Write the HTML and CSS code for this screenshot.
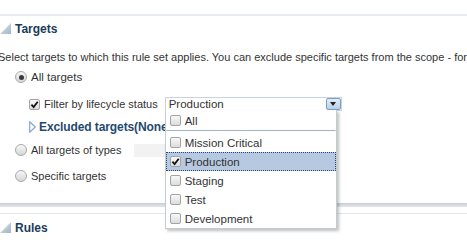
FILE: index.html
```html
<!DOCTYPE html>
<html lang="en">
<head>
    <meta charset="UTF-8">
    <title>Rule Set Targets</title>
    <link rel="stylesheet" href="styles.css">
</head>
<body>
    <div class="rule-top"></div>

    <div class="section-head">
        <svg class="disclosed" width="11" height="11" viewBox="0 0 11 11">
            <defs>
                <linearGradient id="tri1" x1="0" y1="0" x2="1" y2="1">
                    <stop offset="0" stop-color="#e3eaf1"/>
                    <stop offset="1" stop-color="#9fb3c7"/>
                </linearGradient>
            </defs>
            <polygon points="0,11 11,11 11,0" fill="url(#tri1)"/>
        </svg>
        <span>Targets</span>
    </div>

    <p class="desc">Select targets to which this rule set applies. You can exclude specific targets from the scope - for example, test targets.</p>

    <div class="options">
        <div class="opt-row opt-first">
            <span class="radio on"></span>
            <span>All targets</span>
        </div>

        <div class="sub">
            <div class="opt-row filter-row">
                <span class="check on">
                    <svg width="9" height="9" viewBox="0 0 10 10"><path d="M1.6 5.2 L4 7.8 L8.6 2" fill="none" stroke="#111" stroke-width="2"/></svg>
                </span>
                <span>Filter by lifecycle status</span>
                <div class="select">
                    <span class="select-value">Production</span>
                    <span class="select-btn"><span class="arrow"></span></span>

                    <!-- open lifecycle list -->
                    <div class="popup">
                        <div class="item item-all"><span class="check"></span>All</div>
                        <div class="item"><span class="check"></span>Mission Critical</div>
                        <div class="item selected">
                            <span class="check on">
                                <svg width="9" height="9" viewBox="0 0 10 10"><path d="M1.6 5.2 L4 7.8 L8.6 2" fill="none" stroke="#111" stroke-width="2"/></svg>
                            </span>Production
                        </div>
                        <div class="item"><span class="check"></span>Staging</div>
                        <div class="item"><span class="check"></span>Test</div>
                        <div class="item"><span class="check"></span>Development</div>
                    </div>
                </div>
            </div>

            <div class="opt-row excluded">
                <svg width="7" height="12" viewBox="0 0 7 12"><polygon points="0.7,0.8 6.3,6 0.7,11.2" fill="#fff" stroke="#7fa9d3" stroke-width="1.2"/></svg>
                <span>Excluded targets(None)</span>
            </div>
        </div>

        <div class="opt-row opt-types">
            <span class="radio"></span>
            <span>All targets of types</span>
            <span class="types-box"></span>
        </div>

        <div class="opt-row opt-specific">
            <span class="radio"></span>
            <span>Specific targets</span>
        </div>
    </div>

    <div class="rule-bottom"></div>
    <div class="rule-thin"></div>

    <div class="section-head rules-head">
        <svg class="disclosed" width="11" height="11" viewBox="0 0 11 11">
            <defs>
                <linearGradient id="tri2" x1="0" y1="0" x2="1" y2="1">
                    <stop offset="0" stop-color="#e3eaf1"/>
                    <stop offset="1" stop-color="#9fb3c7"/>
                </linearGradient>
            </defs>
            <polygon points="0,11 11,11 11,0" fill="url(#tri2)"/>
        </svg>
        <span>Rules</span>
    </div>
</body>
</html>
```

FILE: styles.css
```css
body {
    margin: 0;
    width: 467px;
    height: 245px;
    overflow: hidden;
    font-family: "Liberation Sans", Arial, sans-serif;
    font-size: 11px;
    color: #333;
    background: #fff;
}

.rule-top {
    margin-top: 14px;
    height: 2px;
    background: #e6ebf0;
}

.section-head {
    display: flex;
    align-items: center;
    gap: 4px;
    height: 16px;
    margin-top: 5px;
    font-size: 12px;
    font-weight: bold;
    color: #1b3c5a;
}

.disclosed {
    margin-top: -1px;
}

.desc {
    margin: 12px 0 0 -2px;
    line-height: 16px;
    white-space: nowrap;
}

.options {
    padding-left: 15px;
}

.opt-row {
    display: flex;
    align-items: center;
    gap: 4px;
    height: 16px;
    white-space: nowrap;
}

.opt-first {
    margin-top: 4px;
    font-size: 11.5px;
}

.sub {
    padding-left: 14px;
}

.filter-row {
    margin-top: 11px;
}

.excluded {
    margin-top: 7px;
    gap: 3px;
    font-size: 12px;
    font-weight: bold;
    letter-spacing: -0.1px;
    color: #1f4a70;
}

.opt-types {
    margin-top: 7px;
}

.opt-specific {
    margin-top: 10px;
}

/* custom controls */
.radio {
    width: 12px;
    height: 12px;
    box-sizing: border-box;
    border: 1px solid #a9a9a9;
    border-radius: 50%;
    background: linear-gradient(#f7f7f7, #d6d6d6);
    display: flex;
    align-items: center;
    justify-content: center;
    flex: none;
}

.radio.on::after {
    content: "";
    width: 5px;
    height: 5px;
    border-radius: 50%;
    background: #3a3a3a;
}

.check {
    width: 11px;
    height: 11px;
    box-sizing: border-box;
    border: 1px solid #a3a3a3;
    border-radius: 2px;
    background: linear-gradient(#f8f8f8, #dcdcdc);
    display: inline-flex;
    align-items: center;
    justify-content: center;
    flex: none;
}

.check svg {
    display: block;
}

.types-box {
    width: 120px;
    height: 13px;
    margin-left: 8px;
    background: #f2f2f2;
}

/* lifecycle select */
.select {
    position: relative;
    margin-left: 3px;
    width: 177px;
    height: 14px;
    box-sizing: border-box;
    border: 1px solid #c7d3df;
    background: #fff;
    display: flex;
    align-items: center;
    justify-content: space-between;
    font-size: 11.5px;
}

.select-value {
    padding-left: 3px;
}

.select-btn {
    width: 15px;
    height: 12px;
    box-sizing: border-box;
    border: 1px solid #7f9fc2;
    border-radius: 2px;
    background: linear-gradient(#e2edf9, #b8cfe9);
    display: flex;
    align-items: center;
    justify-content: center;
}

.arrow {
    width: 0;
    height: 0;
    border-left: 3px solid transparent;
    border-right: 3px solid transparent;
    border-top: 4px solid #222;
}

.popup {
    position: absolute;
    top: 12px;
    left: -1px;
    width: 172px;
    box-sizing: border-box;
    border: 1px solid #c3cbd3;
    border-top: none;
    background: #fff;
    box-shadow: 2px 2px 3px rgba(0, 0, 0, 0.25);
    z-index: 10;
}

.item {
    display: flex;
    align-items: center;
    gap: 4px;
    height: 19px;
    box-sizing: border-box;
    padding-left: 3px;
    border: 1px solid transparent;
}

.item-all {
    height: 21px;
    border-bottom: 1px solid #9db4ce;
    margin-bottom: 2px;
}

.item.selected {
    background: #b7c9e0;
    border: 1px dotted #27497c;
}

.rule-bottom {
    margin-top: 19px;
    height: 4px;
    background: linear-gradient(#c8ced4, #e4e8ec);
}

.rule-thin {
    margin-top: 6px;
    height: 1px;
    background: #e0e6ec;
}

.rules-head {
    margin-top: 6px;
}
```
